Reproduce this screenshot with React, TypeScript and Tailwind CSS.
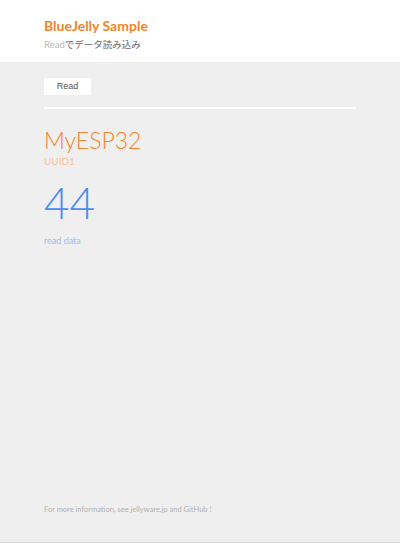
import React from 'react';

export default function App() {
    return (
        <div className="w-[400px] h-[543px] flex flex-col bg-[#efefef] border-b border-[#d8d8d8] font-['Lato','Liberation_Sans',sans-serif]">
            <header className="bg-white h-[62px] px-[44px] pt-[17px]">
                <h1 className="text-[14px] leading-[18px] font-bold text-[#f5842a]">BlueJelly Sample</h1>
                <p className="mt-[3px] text-[9.5px] leading-[13px] text-[#666] font-['Lato','Noto_Sans_CJK_JP',sans-serif]">
                    <span className="text-[#b8b8b8]">Read</span>でデータ読み込み
                </p>
            </header>

            <main className="flex-1 flex flex-col px-[44px] pt-[16px]">
                <button className="w-[47px] h-[17px] bg-white text-[9px] text-[#555] font-['Liberation_Sans',sans-serif]">
                    Read
                </button>
                <div className="mt-[12px] w-[312px] h-[2px] bg-white" />

                <div className="mt-[16px] text-[23px] leading-[30px] font-light text-[#f5842a]">MyESP32</div>
                <div className="text-[10px] leading-[12px] text-[#f8c098]">UUID1</div>
                <div className="mt-[10px] text-[44px] leading-[50px] font-light text-[#4a8bf5]">44</div>
                <div className="mt-[8px] text-[9px] leading-[12px] text-[#9bbdf5]">read data</div>

                <footer className="mt-auto mb-[27px] text-[7.5px] leading-[10px] text-[#b0b0b0]">
                    For more information, see jellyware.jp and GitHub !
                </footer>
            </main>
        </div>
    );
}
